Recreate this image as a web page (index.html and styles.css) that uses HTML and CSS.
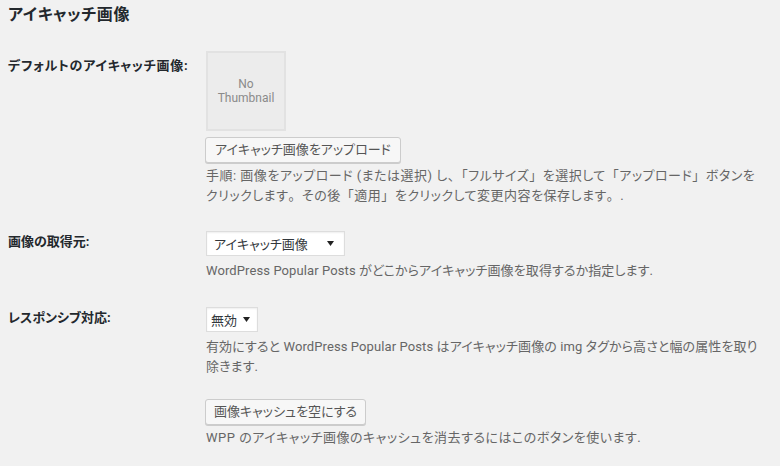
FILE: index.html
```html
<!DOCTYPE html>
<html lang="ja">
<head>
<meta charset="utf-8">
<title>アイキャッチ画像</title>
<link rel="stylesheet" href="styles.css">
</head>
<body>
<div class="page">
  <h2 class="title">アイキャッチ画像</h2>

  <div class="row row-first">
    <div class="label label-top">デフォルトのアイキャッチ画像:</div>
    <div class="field">
      <div class="thumb"><span>No<br>Thumbnail</span></div>
      <button class="btn btn-upload" type="button">アイキャッチ画像をアップロード</button>
      <p class="desc desc-wide">手順: 画像をアップロード (または選択) し<span class="fw">、「</span>フルサイズ<span class="fw">」</span>を選択して<span class="fw">「</span>アップロード<span class="fw">」</span>ボタンを<br>クリックします<span class="fw">。</span>その後<span class="fw">「</span>適用<span class="fw">」</span>をクリックして変更内容を保存します<span class="fw">。</span>.</p>
    </div>
  </div>

  <div class="row row-source">
    <div class="label label-select">画像の取得元:</div>
    <div class="field">
      <div class="select select-wide"><span>アイキャッチ画像</span><svg class="arrow" width="7" height="5" viewBox="0 0 7 5"><path d="M0 0H7L3.5 5Z" fill="#222"/></svg></div>
      <p class="desc desc-select">WordPress Popular Posts がどこからアイキャッチ画像を取得するか指定します.</p>
    </div>
  </div>

  <div class="row row-responsive">
    <div class="label label-select">レスポンシブ対応:</div>
    <div class="field">
      <div class="select select-narrow"><span>無効</span><svg class="arrow" width="7" height="5" viewBox="0 0 7 5"><path d="M0 0H7L3.5 5Z" fill="#222"/></svg></div>
      <p class="desc desc-select">有効にすると WordPress Popular Posts はアイキャッチ画像の img タグから高さと幅の属性を取り<br>除きます.</p>
    </div>
  </div>

  <div class="row row-cache">
    <div class="label"></div>
    <div class="field">
      <button class="btn btn-cache" type="button">画像キャッシュを空にする</button>
      <p class="desc desc-cache">WPP のアイキャッチ画像のキャッシュを消去するにはこのボタンを使います.</p>
    </div>
  </div>
</div>
</body>
</html>
```

FILE: styles.css
```css
html, body {
  margin: 0;
  padding: 0;
  background: #f1f1f1;
}
body {
  font-family: "Roboto", "Noto Sans CJK JP", sans-serif;
  font-feature-settings: "palt";
  font-size: 13px;
  color: #23282d;
  width: 780px;
  height: 466px;
  overflow: hidden;
}
.page {
  padding: 0 8px;
}
.title {
  margin: 0;
  padding-top: 5px;
  font-size: 16px;
  line-height: 20px;
  font-weight: 700;
  letter-spacing: 0.6px;
  color: #23282d;
}
.row {
  display: grid;
  grid-template-columns: 198px 1fr;
}
.row-first { margin-top: 26px; }
.row-source { margin-top: 25px; }
.row-responsive { margin-top: 26px; }
.row-cache { margin-top: 22px; }

.label {
  font-weight: 700;
  font-size: 13px;
  line-height: 20px;
  color: #23282d;
}
.label-top { padding-top: 5px; letter-spacing: 0.7px; }
.label-select { padding-top: 1px; }

.field {
  display: flex;
  flex-direction: column;
  align-items: flex-start;
}
.thumb {
  box-sizing: border-box;
  width: 80px;
  height: 80px;
  border: 2px solid #e2e2e2;
  background: #ececec;
  display: flex;
  align-items: center;
  justify-content: center;
  text-align: center;
  color: #8a8a8a;
  font-size: 12px;
  line-height: 14px;
  margin-bottom: 6px;
}
.btn {
  box-sizing: border-box;
  height: 26px;
  padding: 0 9px;
  border: 1px solid #cccccc;
  border-radius: 3px;
  background: #f7f7f7;
  box-shadow: 0 1px 0 #cccccc;
  color: #555555;
  font-family: "Roboto", "Noto Sans CJK JP", sans-serif;
  font-feature-settings: "palt";
  font-size: 13px;
  line-height: 24px;
  white-space: nowrap;
  margin: 0 0 0 -1px;
}
.btn-cache { padding: 0 8px; }

.desc {
  margin: 3px 0 0 0;
  color: #666666;
  font-size: 13px;
  line-height: 20px;
  white-space: nowrap;
}
.desc-wide { letter-spacing: 0.5px; }
.desc-select { margin-top: 5px; letter-spacing: 0.1px; }
.desc-cache { letter-spacing: 0.5px; }
.fw { font-feature-settings: normal; }

.select {
  box-sizing: border-box;
  height: 25px;
  background: #ffffff;
  border: 1px solid #dddddd;
  box-shadow: inset 0 1px 2px rgba(0,0,0,0.07);
  display: flex;
  align-items: center;
  justify-content: space-between;
  padding: 0 10px 0 7px;
  color: #32373c;
  font-size: 13px;
}
.select-wide { width: 139px; }
.select-narrow { width: 52px; padding-left: 4px; padding-right: 7px; }
.arrow {
  display: block;
}
```
